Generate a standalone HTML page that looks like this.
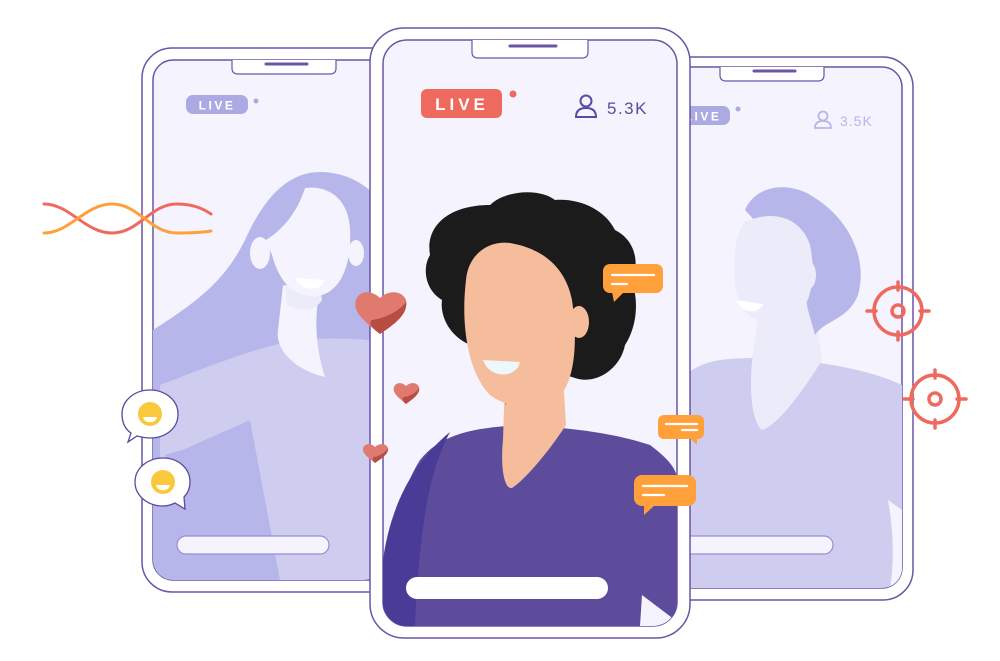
<!DOCTYPE html>
<html><head><meta charset="utf-8"><style>
html,body{margin:0;padding:0;background:#fff;width:1000px;height:661px;overflow:hidden}
svg{display:block}
text{font-family:"Liberation Sans",sans-serif}
</style></head><body>
<svg width="1000" height="661" viewBox="0 0 1000 661" xmlns="http://www.w3.org/2000/svg">
<defs>
<clipPath id="cl"><rect x="153" y="60" width="230" height="520" rx="20"/></clipPath>
<clipPath id="cr"><rect x="670" y="67" width="232" height="521" rx="20"/></clipPath>
<clipPath id="cc"><rect x="383" y="40" width="294" height="586" rx="24"/></clipPath>
</defs>

<!-- LEFT PHONE -->
<rect x="142" y="48" width="260" height="544" rx="30" fill="#fff" stroke="#6a55a8" stroke-width="1.5"/>
<rect x="153" y="60" width="240" height="520" rx="20" fill="#f5f3fd" stroke="#6a55a8" stroke-width="1.5"/>
<g clip-path="url(#cl)">
 <path d="M153 330 C200 300 225 280 245 240 C265 195 290 172 320 172 C355 172 385 195 395 230 L395 580 L153 580 Z" fill="#b7b6ea"/>
 <path d="M160 385 C200 370 260 345 300 340 C340 336 380 340 395 345 L395 580 L280 580 L250 420 L160 460 Z" fill="#cecdf0"/>
 <path d="M165 455 C200 445 230 435 250 440 L270 580 L200 580 C185 540 175 500 165 455 Z" fill="#b7b6ea"/>
 <path d="M283 285 L278 330 C275 350 295 370 325 377 C318 355 314 330 318 300 Z" fill="#f5f3fd"/>
 <path d="M287 305 C300 312 315 312 322 300 L320 285 L285 285 Z" fill="#ecebf9"/>
 <path d="M305 188 C330 185 348 200 350 228 C352 262 342 292 318 296 C296 298 280 285 272 255 L266 240 C285 228 298 210 305 188 Z" fill="#f5f3fd"/>
 <ellipse cx="260" cy="253" rx="10" ry="16" fill="#f5f3fd"/>
 <ellipse cx="356" cy="253" rx="8" ry="13" fill="#f5f3fd"/>
 <path d="M295 278 L325 280 C322 292 300 292 295 278 Z" fill="#fff"/>
</g>
<path d="M232 60 L232 68 Q232 74 238 74 L330 74 Q336 74 336 68 L336 60" fill="#fff" stroke="#6a55a8" stroke-width="1.2"/>
<line x1="266" y1="64" x2="307" y2="64" stroke="#6a55a8" stroke-width="3" stroke-linecap="round"/>
<rect x="186" y="95" width="62" height="19" rx="7" fill="#acaae3"/>
<text x="217" y="109.5" text-anchor="middle" fill="#fff" font-size="12" font-weight="bold" letter-spacing="2.5">LIVE</text>
<circle cx="256" cy="101" r="2.5" fill="#acaae3"/>
<rect x="177" y="536" width="152" height="18" rx="9" fill="#f5f3fd" stroke="#9a8dcf" stroke-width="1.2"/>

<!-- RIGHT PHONE -->
<rect x="660" y="57" width="253" height="543" rx="30" fill="#fff" stroke="#6a55a8" stroke-width="1.5"/>
<rect x="665" y="67" width="237" height="521" rx="20" fill="#f5f3fd" stroke="#6a55a8" stroke-width="1.5"/>
<g clip-path="url(#cr)">
 <path d="M680 380 C700 360 720 358 760 358 C820 360 870 370 902 385 L902 588 L680 588 Z" fill="#cecdf0"/>
 <path d="M888 500 C895 540 893 570 890 588 L902 588 L902 510 Z" fill="#f5f3fd"/>
 <path d="M762 280 L755 340 C748 380 750 420 762 430 C780 425 810 380 822 360 L815 310 Z" fill="#ecebf9"/>
 <path d="M745 210 C755 185 790 180 815 198 C850 220 868 260 858 295 C848 320 825 320 815 335 L808 310 L800 270 Z" fill="#b7b6ea"/>
 <path d="M745 222 C770 210 800 215 810 245 C818 285 808 318 782 322 C752 326 738 312 735 282 C733 255 736 232 745 222 Z" fill="#ecebf9"/>
 <ellipse cx="807" cy="275" rx="9" ry="15" fill="#ecebf9"/>
 <path d="M737 300 L763 304 C760 314 742 315 737 300 Z" fill="#fff"/>
</g>
<path d="M720 67 L720 75 Q720 81 726 81 L818 81 Q824 81 824 75 L824 67" fill="#fff" stroke="#6a55a8" stroke-width="1.2"/>
<line x1="754" y1="71" x2="795" y2="71" stroke="#6a55a8" stroke-width="3" stroke-linecap="round"/>
<rect x="676" y="106" width="54" height="19" rx="7" fill="#acaae3"/>
<text x="703" y="120.5" text-anchor="middle" fill="#fff" font-size="12" font-weight="bold" letter-spacing="2.5">LIVE</text>
<circle cx="738" cy="109" r="2.5" fill="#acaae3"/>
<circle cx="823" cy="116" r="4.5" fill="none" stroke="#b8b6ea" stroke-width="1.8"/>
<path d="M815 128 Q815 121 823 121 Q831 121 831 128 Z" fill="none" stroke="#b8b6ea" stroke-width="1.8"/>
<text x="840" y="126" fill="#b8b6ea" font-size="14" letter-spacing="1">3.5K</text>
<rect x="660" y="536" width="173" height="18" rx="9" fill="#f5f3fd" stroke="#9a8dcf" stroke-width="1.2"/>

<!-- CENTER PHONE -->
<rect x="370" y="28" width="320" height="610" rx="34" fill="#fff" stroke="#6a55a8" stroke-width="1.5"/>
<rect x="383" y="40" width="294" height="586" rx="24" fill="#f5f3fd" stroke="#6a55a8" stroke-width="1.5"/>
<g clip-path="url(#cc)">
 <path d="M383 626 C385 560 395 500 420 460 C440 435 470 428 520 425 C580 428 620 435 650 445 C670 460 677 470 677 480 L677 626 Z" fill="#5d4c9b"/>
 <path d="M383 626 L383 560 C390 510 410 465 450 432 C430 470 420 520 415 626 Z" fill="#4a3c96"/>
 <path d="M642 595 L675 620 L677 626 L640 626 Z" fill="#f5f3fd"/>
 <path d="M505 380 L503 440 C500 470 505 490 512 488 C525 480 550 450 566 425 L562 360 Z" fill="#f5bd9b"/>
 <path d="M505 400 C530 395 550 380 562 368 L562 352 C545 375 525 390 505 405 Z" fill="#e17e63"/>
 <!-- hair -->
 <path d="M430 255 C425 225 450 205 490 205 C505 190 540 188 555 200 C580 198 605 210 615 230 C635 240 640 262 632 282 C640 305 635 330 625 345 C620 370 595 385 575 378 L470 345 C448 335 440 315 442 300 C425 290 422 268 430 255 Z" fill="#1b1b1b"/>
 <!-- face -->
 <path d="M466 280 C468 255 488 240 510 243 C540 248 565 265 572 300 C578 340 575 380 560 395 C540 410 510 410 490 395 C470 375 460 330 466 280 Z" fill="#f5bd9b"/>
 <ellipse cx="579" cy="322" rx="10" ry="16" fill="#f5bd9b"/>
 <path d="M483 360 L520 362 C517 378 490 380 483 360 Z" fill="#eef7fb"/>
</g>
<path d="M472 40 L472 52 Q472 58 478 58 L582 58 Q588 58 588 52 L588 40" fill="#fff" stroke="#6a55a8" stroke-width="1.2"/>
<line x1="510" y1="46" x2="556" y2="46" stroke="#6a55a8" stroke-width="3" stroke-linecap="round"/>
<rect x="421" y="89" width="81" height="29" rx="6" fill="#ee6a5f"/>
<text x="462" y="110" text-anchor="middle" fill="#fff" font-size="17" font-weight="bold" letter-spacing="4">LIVE</text>
<circle cx="513" cy="94" r="3.5" fill="#ee6a5f"/>
<circle cx="586" cy="101" r="5.5" fill="none" stroke="#5b4a9e" stroke-width="2"/>
<path d="M576 117 Q576 108 586 108 Q596 108 596 117 Z" fill="none" stroke="#5b4a9e" stroke-width="2"/>
<text x="607" y="114" fill="#5b4a9e" font-size="17" letter-spacing="1.5">5.3K</text>
<rect x="406" y="577" width="202" height="22" rx="11" fill="#fff"/>

<!-- hearts -->
<path d="M380 334 C365 322 352 312 356 300 C359 290 372 290 380 298 C388 290 402 290 406 300 C409 312 395 322 380 334 Z" fill="#e07a6f"/>
<path d="M380 334 C372 328 368 323 372 320 C385 318 398 312 406 302 C408 314 395 324 380 334 Z" fill="#b84e43"/>
<path d="M406 404 C399 398 392 393 394 387 C396 382 402 382 406 386 C410 382 417 382 419 387 C421 393 413 398 406 404 Z" fill="#e07a6f"/>
<path d="M406 404 C402 400 402 398 404 397 C411 396 417 392 419 388 C420 394 413 399 406 404 Z" fill="#b84e43"/>
<path d="M375 463 C369 458 362 454 363 448 C365 443 371 443 375 447 C379 443 386 443 388 448 C389 454 381 458 375 463 Z" fill="#e07a6f"/>
<path d="M375 463 C372 460 372 458 374 457 C380 456 386 452 388 448 C389 454 381 459 375 463 Z" fill="#b84e43"/>

<!-- orange chat bubbles -->
<g fill="#ffa03b">
 <rect x="603" y="264" width="60" height="29" rx="7"/><path d="M612 292 L614 302 L624 292 Z"/>
 <rect x="658" y="415" width="46" height="24" rx="6"/><path d="M690 438 L697 445 L697 438 Z"/>
 <rect x="634" y="475" width="62" height="31" rx="8"/><path d="M644 505 L644 515 L655 505 Z"/>
</g>
<g stroke="#fff" stroke-width="2.2" stroke-linecap="round">
 <line x1="612" y1="275" x2="654" y2="275"/><line x1="612" y1="284" x2="627" y2="284"/>
 <line x1="666" y1="424" x2="697" y2="424"/><line x1="682" y1="430" x2="697" y2="430"/>
 <line x1="643" y1="486" x2="687" y2="486"/><line x1="643" y1="495" x2="664" y2="495"/>
</g>

<!-- smiley bubbles -->
<path d="M150 390 C165 390 178 400 178 414 C178 429 165 438 150 438 C145 438 141 437 137 436 L128 442 L131 433 C125 429 122 422 122 414 C122 400 135 390 150 390 Z" fill="#fff" stroke="#5b4a9e" stroke-width="1.3"/>
<circle cx="150" cy="414" r="12" fill="#f9c93b"/>
<path d="M143 417 L157 417 C156 424 144 424 143 417 Z" fill="#fff"/>
<path d="M163 458 C178 458 190 468 190 482 C190 488 188 493 184 497 L185 509 L175 503 C171 505 167 506 163 506 C148 506 135 496 135 482 C135 468 148 458 163 458 Z" fill="#fff" stroke="#5b4a9e" stroke-width="1.3"/>
<circle cx="163" cy="482" r="12" fill="#f9c93b"/>
<path d="M156 485 L170 485 C169 492 157 492 156 485 Z" fill="#fff"/>

<!-- DNA wave -->
<path d="M44 204 C70 204 85 233 112 233 C139 233 150 204 177 204 C195 204 205 210 211 214" fill="none" stroke="#ee6a5f" stroke-width="3" stroke-linecap="round"/>
<path d="M44 233 C70 233 85 204 112 204 C139 204 150 233 177 233 C195 233 205 232 211 231" fill="none" stroke="#ffa03b" stroke-width="3" stroke-linecap="round"/>

<!-- crosshairs -->
<g fill="none" stroke="#ee6a5f" stroke-width="3.5" stroke-linecap="round">
 <circle cx="898" cy="311" r="24"/><circle cx="898" cy="311" r="6"/>
 <line x1="898" y1="282" x2="898" y2="290"/><line x1="898" y1="332" x2="898" y2="340"/>
 <line x1="867" y1="311" x2="876" y2="311"/><line x1="920" y1="311" x2="929" y2="311"/>
 <circle cx="935" cy="399" r="24"/><circle cx="935" cy="399" r="6"/>
 <line x1="935" y1="370" x2="935" y2="378"/><line x1="935" y1="420" x2="935" y2="428"/>
 <line x1="904" y1="399" x2="913" y2="399"/><line x1="957" y1="399" x2="966" y2="399"/>
</g>
</svg>
</body></html>
